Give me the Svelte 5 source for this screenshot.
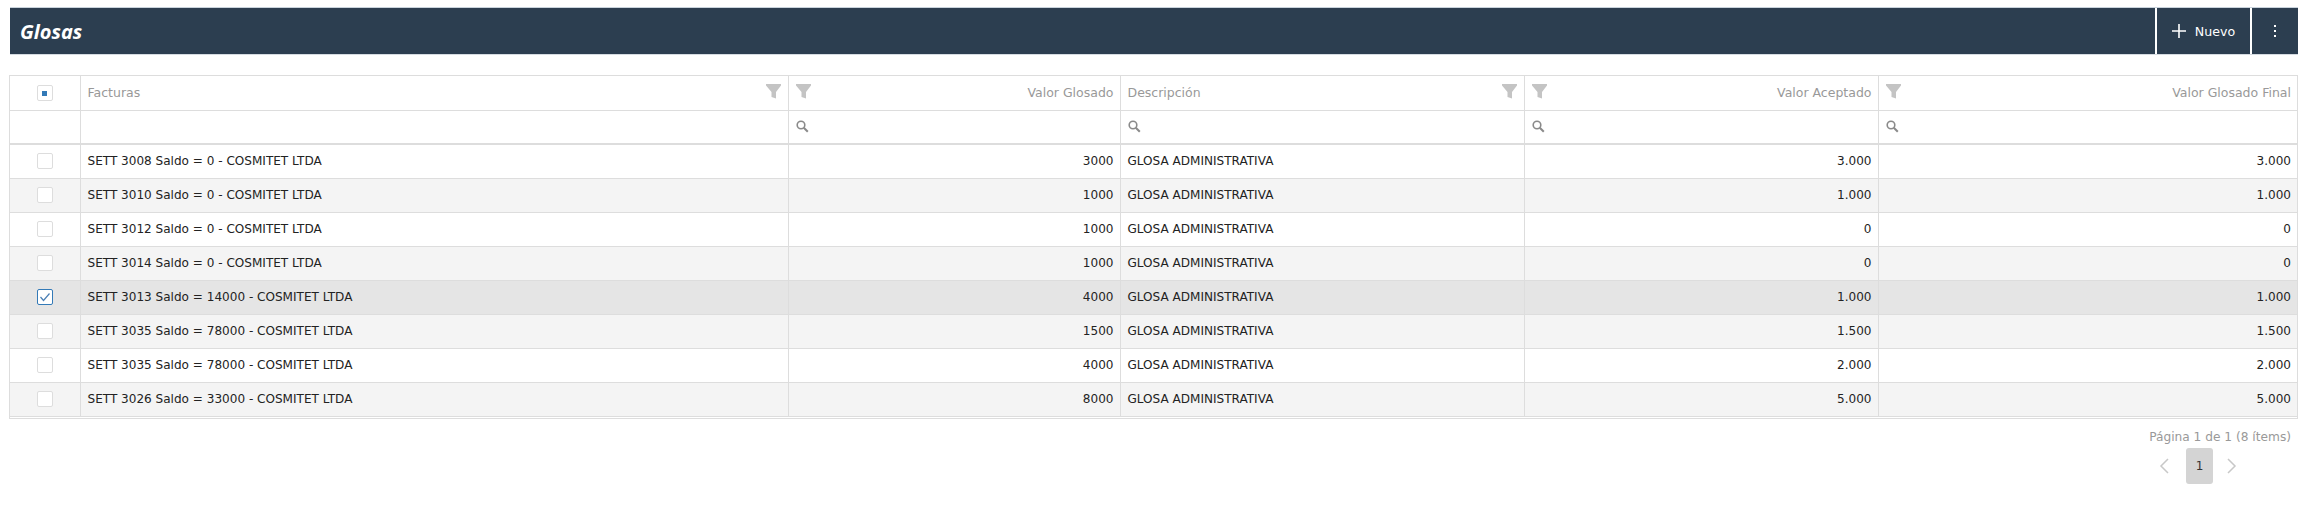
<script>
	const rows = [
		{ factura: "SETT 3008 Saldo = 0 - COSMITET LTDA", glosado: "3000", aceptado: "3.000", final: "3.000" },
		{ factura: "SETT 3010 Saldo = 0 - COSMITET LTDA", glosado: "1000", aceptado: "1.000", final: "1.000" },
		{ factura: "SETT 3012 Saldo = 0 - COSMITET LTDA", glosado: "1000", aceptado: "0", final: "0" },
		{ factura: "SETT 3014 Saldo = 0 - COSMITET LTDA", glosado: "1000", aceptado: "0", final: "0" },
		{ factura: "SETT 3013 Saldo = 14000 - COSMITET LTDA", glosado: "4000", aceptado: "1.000", final: "1.000", selected: true },
		{ factura: "SETT 3035 Saldo = 78000 - COSMITET LTDA", glosado: "1500", aceptado: "1.500", final: "1.500" },
		{ factura: "SETT 3035 Saldo = 78000 - COSMITET LTDA", glosado: "4000", aceptado: "2.000", final: "2.000" },
		{ factura: "SETT 3026 Saldo = 33000 - COSMITET LTDA", glosado: "8000", aceptado: "5.000", final: "5.000" },
	];
</script>

{#snippet funnel()}
	<svg class="funnel" width="15" height="15" viewBox="0 0 15 15"><path d="M0 0h15v1.5L10 8v6.5L5.5 13V8L0 1.5z" fill="#c4c4c4" /></svg>
{/snippet}

{#snippet lens()}
	<svg class="lens" width="13" height="13" viewBox="0 0 13 13" fill="none" stroke="#8a8a8a"><circle cx="5" cy="5" r="3.8" stroke-width="1.6" /><path d="M7.8 7.8l4 4" stroke-width="2" /></svg>
{/snippet}

<div class="page">
	<header class="bar">
		<h1>Glosas</h1>
		<div class="actions">
			<button class="nuevo">
				<svg width="14" height="14" viewBox="0 0 14 14"><path d="M7 0v14M0 7h14" stroke="#fff" stroke-width="1.6" /></svg>
				Nuevo
			</button>
			<button class="more">
				<svg width="4" height="14" viewBox="0 0 4 14" fill="#fff"><rect x="1" y="1" width="2" height="2" /><rect x="1" y="6" width="2" height="2" /><rect x="1" y="11" width="2" height="2" /></svg>
			</button>
		</div>
	</header>

	<div class="grid">
		<table>
			<colgroup>
				<col style="width: 70px" />
				<col style="width: 708px" />
				<col style="width: 332px" />
				<col style="width: 404px" />
				<col style="width: 354px" />
				<col />
			</colgroup>
			<thead>
				<tr class="titles">
					<th class="check"><span class="box partial"><i></i></span></th>
					<th><div class="head"><span>Facturas</span>{@render funnel()}</div></th>
					<th><div class="head">{@render funnel()}<span>Valor Glosado</span></div></th>
					<th><div class="head"><span>Descripción</span>{@render funnel()}</div></th>
					<th><div class="head">{@render funnel()}<span>Valor Aceptado</span></div></th>
					<th><div class="head">{@render funnel()}<span>Valor Glosado Final</span></div></th>
				</tr>
				<tr class="filters">
					<td></td>
					<td></td>
					<td>{@render lens()}</td>
					<td>{@render lens()}</td>
					<td>{@render lens()}</td>
					<td>{@render lens()}</td>
				</tr>
			</thead>
			<tbody>
				{#each rows as row}
					<tr class:selected={row.selected}>
						<td class="check">
							<span class="box" class:on={row.selected}>
								{#if row.selected}
									<svg width="14" height="14" viewBox="0 0 14 14" fill="none"><path d="M2.5 7l3 3.5 6-7" stroke="#4a7fb5" stroke-width="1.2" /></svg>
								{/if}
							</span>
						</td>
						<td>{row.factura}</td>
						<td class="num">{row.glosado}</td>
						<td>GLOSA ADMINISTRATIVA</td>
						<td class="num">{row.aceptado}</td>
						<td class="num">{row.final}</td>
					</tr>
				{/each}
			</tbody>
		</table>
	</div>

	<footer class="pager">
		<div class="info">Página 1 de 1 (8 ítems)</div>
		<div class="nav">
			<svg class="prev" width="12" height="18" viewBox="0 0 12 18" fill="none"><path d="M10 2L3 9l7 7" stroke="#c8c8c8" stroke-width="1.5" /></svg>
			<span class="current">1</span>
			<svg width="12" height="18" viewBox="0 0 12 18" fill="none"><path d="M2 2l7 7-7 7" stroke="#c8c8c8" stroke-width="1.5" /></svg>
		</div>
	</footer>
</div>

<style>
	:global(body) {
		margin: 0;
		background: #fff;
	}

	.page {
		padding: 7px 13px 0 9px;
		font-family: "DejaVu Sans", Tahoma, sans-serif;
		font-size: 12.05px;
		color: #222;
	}

	.bar {
		display: flex;
		justify-content: space-between;
		align-items: stretch;
		height: 48px;
		margin-left: 1px;
		background: #2c3e50;
		border-top: 1px solid #c9d3dc;
		border-bottom: 1px solid #d5dbe1;
		box-sizing: border-box;
	}

	h1 {
		margin: 0;
		padding-left: 10px;
		align-self: center;
		font-family: "Open Sans", sans-serif;
		font-size: 20px;
		font-style: italic;
		font-weight: bold;
		color: #fff;
	}

	.actions {
		display: flex;
	}

	button {
		display: flex;
		align-items: center;
		justify-content: center;
		background: none;
		border: 0;
		border-left: 2px solid #fff;
		padding: 0;
		color: #fff;
		font: inherit;
	}

	.nuevo {
		width: 95px;
		gap: 9px;
		font-size: 12.6px;
	}

	.more {
		width: 48px;
	}

	.grid {
		margin-top: 20px;
		border: 1px solid #ddd;
		border-bottom: 3px double #ddd;
	}

	table {
		width: 100%;
		table-layout: fixed;
		border-collapse: collapse;
	}

	th, td {
		border-left: 1px solid #ddd;
		padding: 0 6px 0 7px;
		box-sizing: border-box;
		height: 34px;
		font-weight: normal;
		text-align: left;
		white-space: nowrap;
	}

	th:first-child, td:first-child {
		border-left: 0;
	}

	.titles th {
		color: #999;
		border-bottom: 1px solid #ddd;
		font-size: 12.5px;
	}

	.filters td {
		height: 34px;
		border-bottom: 2px solid #ddd;
	}

	.head {
		display: flex;
		justify-content: space-between;
		align-items: center;
	}

	.funnel {
		margin-top: -3px;
	}

	.funnel:last-child {
		margin-right: 1px;
	}

	.lens {
		display: block;
	}

	tbody td {
		border-bottom: 1px solid #ddd;
	}

	tbody tr:last-child td {
		border-bottom: 0;
	}

	tbody tr:nth-child(even) {
		background: #f4f4f4;
	}

	tbody tr.selected {
		background: #e5e5e5;
	}

	.num {
		text-align: right;
	}

	th.check, td.check {
		padding: 0;
		text-align: center;
	}

	.box {
		display: inline-flex;
		align-items: center;
		justify-content: center;
		width: 16px;
		height: 16px;
		box-sizing: border-box;
		border: 1px solid #ddd;
		border-radius: 2px;
		background: #fff;
		vertical-align: middle;
	}

	.box.on {
		border-color: #337ab7;
	}

	.box i {
		width: 5px;
		height: 5px;
		background: #337ab7;
	}

	.pager {
		display: flex;
		flex-direction: column;
		align-items: flex-end;
		padding: 11px 7px 0 0;
		color: #999;
		font-size: 12.2px;
	}

	.nav {
		display: flex;
		align-items: center;
		gap: 13px;
		margin-top: 4px;
		padding-right: 53px;
	}

	.prev {
		margin-right: 3px;
	}

	.current {
		width: 27px;
		height: 36px;
		display: flex;
		align-items: center;
		justify-content: center;
		background: #d4d4d4;
		border-radius: 3px;
		color: #333;
		font-size: 12px;
	}
</style>
